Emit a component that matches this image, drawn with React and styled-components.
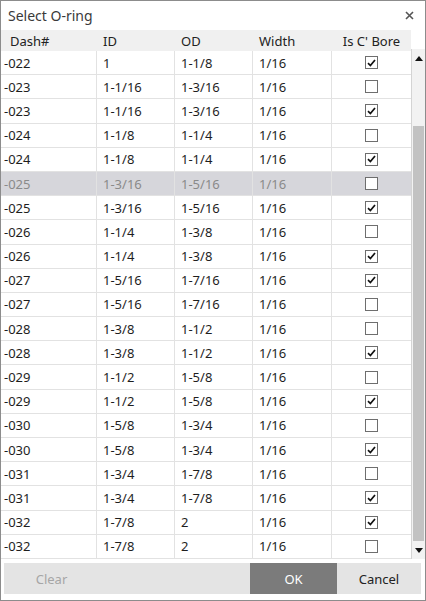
import styled, { createGlobalStyle } from 'styled-components'

const GlobalStyle = createGlobalStyle`
  html, body {
    margin: 0;
    padding: 0;
    background: #ffffff;
  }
  body {
    font-family: "Noto Sans", "Open Sans", sans-serif;
  }
`

const rows = [
  ['-022', '1', '1-1/8', '1/16', true],
  ['-023', '1-1/16', '1-3/16', '1/16', false],
  ['-023', '1-1/16', '1-3/16', '1/16', true],
  ['-024', '1-1/8', '1-1/4', '1/16', false],
  ['-024', '1-1/8', '1-1/4', '1/16', true],
  ['-025', '1-3/16', '1-5/16', '1/16', false],
  ['-025', '1-3/16', '1-5/16', '1/16', true],
  ['-026', '1-1/4', '1-3/8', '1/16', false],
  ['-026', '1-1/4', '1-3/8', '1/16', true],
  ['-027', '1-5/16', '1-7/16', '1/16', true],
  ['-027', '1-5/16', '1-7/16', '1/16', false],
  ['-028', '1-3/8', '1-1/2', '1/16', false],
  ['-028', '1-3/8', '1-1/2', '1/16', true],
  ['-029', '1-1/2', '1-5/8', '1/16', false],
  ['-029', '1-1/2', '1-5/8', '1/16', true],
  ['-030', '1-5/8', '1-3/4', '1/16', false],
  ['-030', '1-5/8', '1-3/4', '1/16', true],
  ['-031', '1-3/4', '1-7/8', '1/16', false],
  ['-031', '1-3/4', '1-7/8', '1/16', true],
  ['-032', '1-7/8', '2', '1/16', true],
  ['-032', '1-7/8', '2', '1/16', false],
]

const SELECTED = 5

const Dialog = styled.div`
  width: 426px;
  height: 601px;
  box-sizing: border-box;
  border: 1px solid #8c8c8c;
  background: #fff;
  display: flex;
  flex-direction: column;
  overflow: hidden;
`

const TitleBar = styled.div`
  height: 29px;
  display: flex;
  align-items: center;
  justify-content: space-between;
  padding: 0 11px 0 7px;
  font-size: 14px;
  color: #3a3a3a;
`

const CloseIcon = styled.svg`
  width: 9px;
  height: 9px;
  stroke: #555;
  stroke-width: 1.6;
`

const Body = styled.div`
  display: flex;
  height: 529px;
`

const Table = styled.div`
  width: 410px;
  display: flex;
  flex-direction: column;
`

const Grid = styled.div`
  display: grid;
  grid-template-columns: 96px 78px 78px 79px 79px;
  box-sizing: border-box;
`

const HeaderRow = styled(Grid)`
  height: 21px;
  background: #f0f0f0;
`

const HeaderCell = styled.div`
  display: flex;
  align-items: center;
  justify-content: ${(p) => (p.$center ? 'center' : 'flex-start')};
  padding-left: ${(p) => (p.$first ? '9px' : p.$center ? '0' : '6px')};
  font-size: 13px;
  color: #222;
`

const Row = styled(Grid)`
  height: 24.2px;
  border-bottom: 1px solid #e2e2e2;
  background: ${(p) => (p.$selected ? '#d6d6db' : '#fff')};
  color: ${(p) => (p.$selected ? '#8a8a8a' : '#1e1e1e')};
`

const Cell = styled.div`
  display: flex;
  align-items: center;
  justify-content: ${(p) => (p.$center ? 'center' : 'flex-start')};
  padding-left: ${(p) => (p.$first ? '3px' : p.$center ? '0' : '6px')};
  border-right: 1px solid #e2e2e2;
  font-size: 13px;
  &:last-child {
    border-right: none;
  }
`

const Box = styled.span`
  width: 13px;
  height: 13px;
  box-sizing: border-box;
  border: 1px solid #6e6e6e;
  background: #fff;
  display: flex;
  align-items: center;
  justify-content: center;
`

const ScrollColumn = styled.div`
  width: 14px;
  display: flex;
  flex-direction: column;
`

const ScrollSpacer = styled.div`
  height: 21px;
`

const ScrollTrack = styled.div`
  flex: 1;
  border-left: 1px solid #d4d4d4;
  background: #f2f2f2;
  display: flex;
  flex-direction: column;
  align-items: center;
`

const Arrow = styled.div`
  height: 18px;
  display: flex;
  align-items: center;
  justify-content: center;
`

const ArrowIcon = styled.svg`
  width: 8px;
  height: 5px;
  fill: #111;
`

const Thumb = styled.div`
  width: 11px;
  height: 415px;
  margin-top: 59px;
  background: #c2c2c2;
`

const Footer = styled.div`
  height: 31px;
  margin: 4px 4px 0 3px;
  background: #e4e4e4;
  display: flex;
`

const Button = styled.div`
  width: ${(p) => p.$width}px;
  display: flex;
  align-items: center;
  justify-content: center;
  font-size: 13px;
  background: ${(p) => (p.$primary ? '#7b7b7b' : 'transparent')};
  color: ${(p) => (p.$primary ? '#ffffff' : p.$disabled ? '#a6a6a6' : '#222')};
`

const Fill = styled.div`
  flex: 1;
`

function Check({ checked }) {
  return (
    <Box>
      {checked && (
        <svg width="9" height="8" viewBox="0 0 9 8">
          <path d="M1 4.2 L3.4 6.6 L8 1" fill="none" stroke="#111" strokeWidth="1.7" />
        </svg>
      )}
    </Box>
  )
}

export default function App() {
  return (
    <>
      <GlobalStyle />
      <Dialog>
        <TitleBar>
          <span>Select O-ring</span>
          <CloseIcon viewBox="0 0 9 9">
            <path d="M1 1 L8 8 M8 1 L1 8" />
          </CloseIcon>
        </TitleBar>
        <Body>
          <Table>
            <HeaderRow>
              <HeaderCell $first>Dash#</HeaderCell>
              <HeaderCell>ID</HeaderCell>
              <HeaderCell>OD</HeaderCell>
              <HeaderCell>Width</HeaderCell>
              <HeaderCell $center>Is C' Bore</HeaderCell>
            </HeaderRow>
            {rows.map((r, i) => (
              <Row key={i} $selected={i === SELECTED}>
                <Cell $first>{r[0]}</Cell>
                <Cell>{r[1]}</Cell>
                <Cell>{r[2]}</Cell>
                <Cell>{r[3]}</Cell>
                <Cell $center>
                  <Check checked={r[4]} />
                </Cell>
              </Row>
            ))}
          </Table>
          <ScrollColumn>
            <ScrollSpacer />
            <ScrollTrack>
              <Arrow>
                <ArrowIcon viewBox="0 0 8 5">
                  <path d="M0 5 L4 0 L8 5 Z" />
                </ArrowIcon>
              </Arrow>
              <Thumb />
              <Fill />
              <Arrow>
                <ArrowIcon viewBox="0 0 8 5">
                  <path d="M0 0 L8 0 L4 5 Z" />
                </ArrowIcon>
              </Arrow>
            </ScrollTrack>
          </ScrollColumn>
        </Body>
        <Footer>
          <Button $width={95} $disabled>Clear</Button>
          <Fill />
          <Button $width={87} $primary>OK</Button>
          <Button $width={84}>Cancel</Button>
        </Footer>
      </Dialog>
    </>
  )
}
